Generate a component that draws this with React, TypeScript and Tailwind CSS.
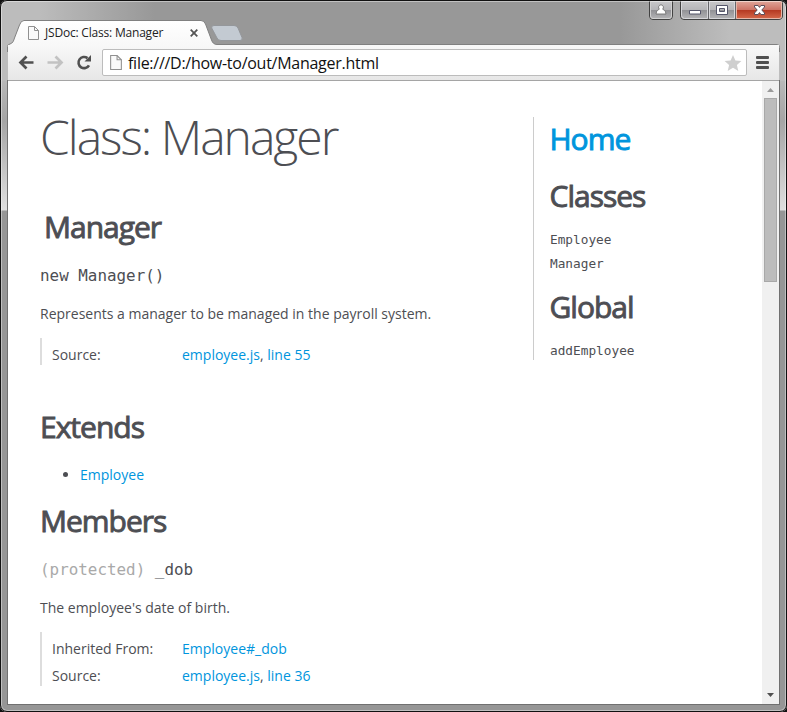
import React from "react";

const SANS = "font-['Open_Sans','Noto_Sans',sans-serif]";
const MONO = "font-['DejaVu_Sans_Mono',monospace]";
const STROKED = "text-[30px] leading-[30px] font-normal tracking-[-1px] [-webkit-text-stroke:0.9px_currentColor] whitespace-nowrap";

function H2({ children, className = "" }: { children: React.ReactNode; className?: string }) {
  return <h2 className={`${STROKED} ${className}`}>{children}</h2>;
}

function PageIcon({ w, h }: { w: number; h: number }) {
  return (
    <svg width={w} height={h} viewBox="0 0 11 14" className="shrink-0" fill="#fafafa" stroke="#909090" strokeWidth="1">
      <path d="M.5.5h6l4 4v9H.5z" />
      <path d="M6.5.5v4h4" fill="none" />
    </svg>
  );
}

function TitleBar() {
  return (
    <div className="relative h-[44px] shrink-0">
      <svg className="absolute left-0 top-0" width="787" height="52" viewBox="0 0 787 52">
        <defs>
          <linearGradient id="tab" x1="0" y1="20" x2="0" y2="52" gradientUnits="userSpaceOnUse">
            <stop offset="0" stopColor="#ffffff" />
            <stop offset="1" stopColor="#f6f6f6" />
          </linearGradient>
        </defs>
        <path d="M7.500 54V46.500Q7.500 44.500 10 44C13 43 13.500 41 14.500 38L19.500 25Q21 20.500 24 20.500H201Q204 20.500 205.500 24L211.500 40Q213 44.500 217 44.500H777Q779.500 44.500 779.500 47.500V54" fill="url(#tab)" stroke="#808080" />
        <path d="M214 25.500H234Q237 25.500 238 28L242 37.500Q243 40.500 240 40.500H221Q218 40.500 217 38L211.700 28Q211 25.500 214 25.500Z" fill="#c3cad2" stroke="#94979b" />
        <g stroke="#424242" strokeWidth="1">
          <path d="M649.500 1V16Q649.500 19.500 653 19.500H669Q672.500 19.500 672.500 16V1" fill="#a0a0a0" />
          <path d="M680.500 1V16Q680.500 19.500 684 19.500H778Q782.500 19.500 782.500 16V1" fill="#a9a9ab" />
        </g>
      </svg>
      <div className="absolute left-[28px] top-[26px] flex h-[14px] items-center">
        <PageIcon w={11} h={14} />
        <span className="ml-[6px] whitespace-nowrap text-[12px] tracking-[-0.2px] text-[#222]">JSDoc: Class: Manager</span>
      </div>
      <svg className="absolute left-[190px] top-[29px]" width="8" height="8" stroke="#555" strokeWidth="1.800">
        <path d="M.7.7l6.600 6.600M7.300.7l-6.600 6.600" />
      </svg>
      <svg className="absolute left-[649px] top-0" width="135" height="21" viewBox="649 0 135 21">
        <defs>
          <linearGradient id="grey" x1="0" y1="0" x2="0" y2="1">
            <stop offset="0" stopColor="#c7c7c9" />
            <stop offset=".5" stopColor="#b5b5b8" />
            <stop offset=".52" stopColor="#929296" />
            <stop offset="1" stopColor="#b2b2b4" />
          </linearGradient>
          <linearGradient id="red" x1="0" y1="0" x2="0" y2="1">
            <stop offset="0" stopColor="#dfa397" />
            <stop offset=".48" stopColor="#cd7466" />
            <stop offset=".5" stopColor="#b43821" />
            <stop offset="1" stopColor="#d46749" />
          </linearGradient>
        </defs>
        <path d="M650.500 1.500h21V16q0 2.500-2.500 2.500h-16q-2.500 0-2.500-2.500z" fill="url(#grey)" stroke="#d0d0d0" />
        <path d="M681.500 1.500h26v17h-23q-3 0-3-3z" fill="url(#grey)" stroke="#d6d6da" />
        <path d="M709.500 1.500h25v17h-25z" fill="url(#grey)" stroke="#d6d6da" />
        <path d="M736.500 1.500h45V16q0 2.500-2.500 2.500h-42.500z" fill="url(#red)" stroke="#e7b6a8" />
        <path d="M708.500 1v18M735.500 1v18" stroke="#66666a" />
        <path d="M661 4.800a2.600 2.600 0 0 1 1.700 4.400q3.300.8 3.300 4.800h-10q0-4 3.300-4.800A2.600 2.600 0 0 1 661 4.800z" fill="#fff" stroke="#707070" strokeWidth=".9" />
        <path d="M689.500 10.500h11v3.500h-11z" fill="#fff" stroke="#55566a" />
        <path d="M716.500 5.500h11v9h-11zM719.500 8.500h5v3h-5z" fill="#fff" fillRule="evenodd" stroke="#55566a" />
        <path d="M754.500 5.500h3.600l1.400 1.900 1.400-1.900h3.600v1.500L761.800 10l2.700 3v1.500h-3.600l-1.400-1.900-1.400 1.900h-3.600V13l2.700-3-2.700-3z" fill="#fff" stroke="#5b4d59" />
      </svg>
    </div>
  );
}

function Toolbar() {
  return (
    <div className="relative mx-[8px] flex h-[37px] shrink-0 items-start border-b border-[#a5a5a5] pt-[5px]">
      <div className="absolute inset-x-0 bottom-0 top-[1px] bg-linear-to-b from-[#f8f8f8] to-[#e7e7e7]" />
      <svg className="relative shrink-0" width="94" height="28" fill="none" viewBox="7 49 94 28">
        <path d="M32.500 62.500H20M25.500 56.500l-6 6 6 6" stroke="#505050" strokeWidth="2.700" />
        <path d="M46.500 62.500H60M54.500 56.500l6 6-6 6" stroke="#c2c2c2" strokeWidth="2.700" />
        <path d="M88 65.300a5.600 5.600 0 1 1-1.500-7.200" stroke="#505050" strokeWidth="2.600" />
        <path d="M90 55v6.500h-6.500z" fill="#505050" />
      </svg>
      <div className="relative flex h-[27px] w-[645px] items-center rounded-[2px] border border-[#bcbcbc] bg-white pl-[7px] pr-[4px]">
        <PageIcon w={12} h={15} />
        <span className="ml-[6px] grow whitespace-nowrap text-[16px] tracking-[-0.27px] text-[#111]">file:///D:/how-to/out/Manager.html</span>
        <svg width="18" height="18" viewBox="0 0 18 18" fill="#cfcfcf">
          <path d="M9 1l2.400 5.600 6 .5-4.500 4 1.400 5.900L9 13.800 3.700 17l1.400-5.900-4.500-4 6-.5z" />
        </svg>
      </div>
      <div className="relative ml-[9px] mt-[7px] flex flex-col gap-[2px]">
        <i className="h-[3px] w-[13px] rounded-[1px] bg-[#505050]" />
        <i className="h-[3px] w-[13px] rounded-[1px] bg-[#505050]" />
        <i className="h-[3px] w-[13px] rounded-[1px] bg-[#505050]" />
      </div>
    </div>
  );
}

function Row({ label, link, line }: { label: string; link: string; line?: string }) {
  return (
    <div className="flex h-[27px] items-center pt-[6px]">
      <dt className="w-[130px]">{label}</dt>
      <dd className="whitespace-nowrap">
        <a className="text-[#0095dd]">{link}</a>
        {line && <>, <a className="text-[#0095dd]">{line}</a></>}
      </dd>
    </div>
  );
}

function Scrollbar() {
  return (
    <div className="flex w-[17px] shrink-0 flex-col items-center bg-[#f0f0f0]">
      <svg width="17" height="17" className="shrink-0" fill="#9a9a9a"><path d="M5 11l3.500-4 3.500 4z" /></svg>
      <div className="h-[184px] w-[13px] shrink-0 border border-[#a8a8a8] bg-[#bcbcbc]" />
      <svg width="17" height="17" className="mt-auto" fill="#505050"><path d="M5 6h7l-3.500 4z" /></svg>
    </div>
  );
}

export default function App() {
  return (
    <div className={`relative h-[712px] w-[787px] overflow-hidden bg-[#111] ${SANS}`}>
      <div className="flex h-[712px] w-[787px] flex-col overflow-hidden rounded-[7px] bg-[linear-gradient(90deg,#bcbcbc_0,#bcbcbc_40px,#989898_155px,#989898_620px,#bdbdbd_730px)]">
        <TitleBar />
        <Toolbar />
        <div className="flex h-[631px] bg-[linear-gradient(#b8b8b8_0,#a5a5a5_40px,#dfdfdf_129px,#969696_130px)] px-[8px] pb-[8px]">
          <div className="flex grow overflow-hidden bg-white shadow-[0_0_0_1px_#707070]">
            <main className="w-[524px] shrink-0 pl-[32px] text-[14px] leading-[17px] text-[#4d4e53]">
              <h1 className="mt-[32px] whitespace-nowrap text-[48px] font-light leading-[48px] tracking-[-2px]">Class: Manager</h1>
              <H2 className="ml-[4px] mt-[51px]">Manager</H2>
              <h4 className={`mt-[24px] text-[15.900px] leading-[20px] ${MONO}`}>new Manager()</h4>
              <p className="mt-[19px] whitespace-nowrap">Represents a manager to be managed in the payroll system.</p>
              <dl className="mt-[16px] border-l-2 border-[#ddd] pl-[10px]">
                <Row label="Source:" link="employee.js" line="line 55" />
              </dl>
              <H2 className="mt-[47px]">Extends</H2>
              <ul className="mt-[24px] list-disc pl-[40px]">
                <li><a className="text-[#0095dd]">Employee</a></li>
              </ul>
              <H2 className="mt-[23px]">Members</H2>
              <h4 className={`mt-[24px] whitespace-pre text-[15.900px] leading-[20px] ${MONO}`}><span className="text-[#a9a9a9]">(protected)</span> _dob</h4>
              <p className="mt-[19px]">The employee's date of birth.</p>
              <dl className="mt-[16px] border-l-2 border-[#ddd] pl-[10px]">
                <Row label="Inherited From:" link="Employee#_dob" />
                <Row label="Source:" link="employee.js" line="line 36" />
              </dl>
            </main>
            <nav className="ml-[1px] mt-[36px] h-[243px] grow border-l border-[#ccc] pl-[16px] text-[#4d4e53]">
              <H2 className="-ml-[0.5px] mt-[7px] text-[#0095dd]">Home</H2>
              <H2 className="-ml-[0.5px] mt-[27px]">Classes</H2>
              <ul className={`mt-[17px] text-[12.780px] leading-[24px] ${MONO}`}>
                <li>Employee</li>
                <li>Manager</li>
              </ul>
              <H2 className="-ml-[0.5px] mt-[16px]">Global</H2>
              <ul className={`mt-[17px] text-[12.780px] leading-[24px] ${MONO}`}>
                <li>addEmployee</li>
              </ul>
            </nav>
            <Scrollbar />
          </div>
        </div>
      </div>
      <div className="pointer-events-none absolute inset-0 rounded-[7px] border border-[#111] shadow-[inset_0_0_0_1px_rgba(255,255,255,0.4)]" />
    </div>
  );
}
